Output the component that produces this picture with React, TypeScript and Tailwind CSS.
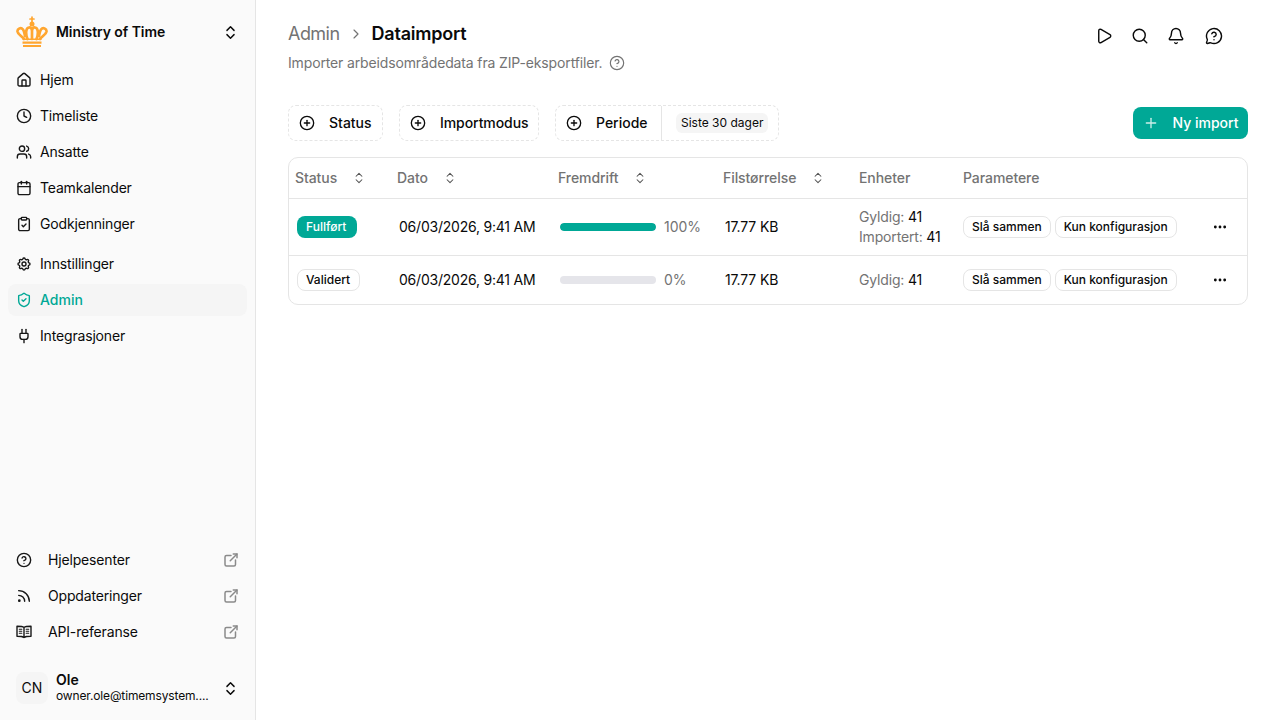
import React from "react";
import {
  House, Clock, Users, Calendar, ClipboardCheck, ShieldCheck, Plug, CircleHelp, Rss,
  ChevronsUpDown, Play, Search, Bell, MessageCircleQuestion, CirclePlus, Plus, Ellipsis, ChevronRight,
} from "lucide-react";
import { TbExternalLink, TbSettings } from "react-icons/tb";

const Crown = () => (
  <svg width="32" height="32" viewBox="0 0 32 32" fill="none" className="shrink-0">
    <g stroke="#FFA630" strokeLinecap="round" strokeLinejoin="round">
      <path d="M16 1v5M14 3h4" strokeWidth="1.700" />
      <path d="M8 23C6 20 2 19 1.500 15.500 1.200 12.500 5 11 7 13.500 8.500 15.500 8.500 18 9 20M11.500 23C9.500 18 9.500 12 13 11.500 15 11.200 16 13 16 15 16 13 17 11.200 19 11.500 22.500 12 22.500 18 20.500 23M24 23C26 20 30 19 30.500 15.500 30.800 12.500 27 11 25 13.500 23.500 15.500 23.500 18 23 20M16 15V23" strokeWidth="2.700" />
    </g>
    <circle cx="16" cy="8" r="2.500" fill="#FFA630" />
    <path d="M6.500 22.500h19v1.500h-19zM6.500 25.500h19v2.200h-19zM7 29h18v2h-18z" fill="#FFA630" />
  </svg>
);

const BookIcon = ({ size = 16, className = "" }: { size?: number; strokeWidth?: number; className?: string }) => (
  <svg width={size} height={size} viewBox="0 0 16 16" fill="none" stroke="currentColor" strokeWidth="1.400" strokeLinecap="round" strokeLinejoin="round" className={className}>
    <path d="M8 3.500C7 2.700 5.500 2.300 1 2.300v9.900c4.500 0 6 .4 7 1.300 1-.9 2.500-1.300 7-1.300V2.300c-4.500 0-6 .4-7 1.200zM8 3.500v10" />
    <path d="M3.300 5.300h2.500M3.300 7.300h2.500M3.300 9.300h2.500M10.200 5.300h2.500M10.200 7.300h2.500M10.200 9.300h2.500" strokeWidth="1.100" />
  </svg>
);

const NavItem = ({ icon: Icon, label, active }: { icon: any; label: string; active?: boolean }) => (
  <a className={`flex h-8 items-center gap-2 rounded-lg px-2 text-sm ${active ? "bg-[#f5f5f5] font-medium text-[#00a896]" : "tracking-[-0.012em] text-[#0a0a0a]"}`}>
    <Icon size={16} strokeWidth={2.1} className={active ? "text-[#00a896]" : "text-[#171717]"} />
    <span>{label}</span>
  </a>
);

const FootItem = ({ icon: Icon, label }: { icon: any; label: string }) => (
  <a className="flex h-8 items-center rounded-lg px-2 text-sm tracking-[-0.012em] text-[#0a0a0a]">
    <Icon size={16} strokeWidth={2.1} className="text-[#171717]" />
    <span className="ml-4 flex-1">{label}</span>
    <TbExternalLink size={18} strokeWidth={2} className="-mr-px text-[#8a8a8a]" />
  </a>
);

const Filter = ({ label, className = "" }: { label: string; className?: string }) => (
  <button className={`flex h-9 items-center gap-[14px] rounded-lg border border-dashed border-[#e5e5e5] pl-[10px] text-sm font-medium text-[#0a0a0a] ${className}`}>
    <CirclePlus size={16} strokeWidth={2} />
    {label}
  </button>
);

const Head = ({ label, sort, className = "" }: { label: string; sort?: boolean; className?: string }) => (
  <th className={`h-10 py-0 pt-px text-left align-middle text-sm font-medium tracking-[-0.005em] text-[#737373] ${className}`}>
    <span className="flex items-center gap-[15px]">
      {label}
      {sort && <ChevronsUpDown size={14} strokeWidth={1.75} className="text-[#525252]" />}
    </span>
  </th>
);

const Tag = ({ children }: { children: React.ReactNode }) => (
  <span className="flex h-[22px] items-center rounded-lg border border-[#e5e5e5] px-2 text-xs font-medium text-[#0a0a0a]">{children}</span>
);

const Row = ({ status, pct, imported }: { status: "done" | "valid"; pct: number; imported?: boolean }) => (
  <tr className={imported ? "h-[57px] border-b border-[#e5e5e5]" : "h-[49px]"}>
    <td className="px-2 align-middle">
      <div className="flex">
        {status === "done" ? (
          <span className="flex h-[22px] w-[60px] items-center rounded-lg bg-[#00a896] pl-[9px] text-xs font-medium text-white">Fullført</span>
        ) : (
          <span className="flex h-[22px] w-[63px] items-center rounded-lg border border-[#e5e5e5] pl-2 text-xs font-medium text-[#0a0a0a]">Validert</span>
        )}
      </div>
    </td>
    <td className="px-2 align-middle text-sm tracking-[-0.016em] text-[#0a0a0a]">06/03/2026, 9:41 AM</td>
    <td className="px-2 align-middle">
      <div className="flex items-center gap-2">
        <div className="h-2 w-24 overflow-hidden rounded-full bg-[#e5e5ea]">
          <div className="h-full rounded-full bg-[#00a896]" style={{ width: `${pct}%` }} />
        </div>
        <span className="text-sm text-[#737373]">{pct}%</span>
      </div>
    </td>
    <td className="px-2 align-middle text-sm tracking-[-0.01em] text-[#0a0a0a]">17.77 KB</td>
    <td className="px-2 align-middle text-sm leading-5 tracking-[-0.012em] text-[#737373]">
      <div>Gyldig: <span className="text-[#0a0a0a]">41</span></div>
      {imported && <div>Importert: <span className="text-[#0a0a0a]">41</span></div>}
    </td>
    <td className="px-2 align-middle">
      <div className="flex gap-1">
        <Tag>Slå sammen</Tag>
        <Tag>Kun konfigurasjon</Tag>
      </div>
    </td>
    <td className="pl-[13px] align-middle">
      <Ellipsis size={16} strokeWidth={2.25} className="text-[#0a0a0a]" />
    </td>
  </tr>
);

export default function App() {
  return (
    <div className="flex h-[720px] w-[1280px] overflow-hidden bg-white font-['Inter',sans-serif] text-[#0a0a0a]">
      <aside className="flex w-[256px] shrink-0 flex-col border-r border-[#e5e5e5] bg-[#fafafa]">
        <div className="flex h-[64px] shrink-0 items-center pl-4 pr-4">
          <Crown />
          <span className="ml-2 flex-1 text-sm font-semibold tracking-[-0.005em]">Ministry of Time</span>
          <ChevronsUpDown size={17} strokeWidth={2} />
        </div>
        <nav className="flex flex-col gap-1 pl-2 pr-2">
          <NavItem icon={House} label="Hjem" />
          <NavItem icon={Clock} label="Timeliste" />
          <NavItem icon={Users} label="Ansatte" />
          <NavItem icon={Calendar} label="Teamkalender" />
          <NavItem icon={ClipboardCheck} label="Godkjenninger" />
          <div className="mt-1 flex flex-col gap-1">
            <NavItem icon={TbSettings} label="Innstillinger" />
            <NavItem icon={ShieldCheck} label="Admin" active />
            <NavItem icon={Plug} label="Integrasjoner" />
          </div>
        </nav>
        <div className="mt-auto flex flex-col gap-1 pl-2 pr-2">
          <FootItem icon={CircleHelp} label="Hjelpesenter" />
          <FootItem icon={Rss} label="Oppdateringer" />
          <FootItem icon={BookIcon} label="API-referanse" />
        </div>
        <div className="mb-4 mt-[24px] flex h-8 items-center pl-4 pr-4">
          <div className="flex size-8 shrink-0 items-center justify-center rounded-lg bg-[#f5f5f5] text-sm">CN</div>
          <div className="ml-2 min-w-0 flex-1">
            <div className="text-sm font-semibold leading-4">Ole</div>
            <div className="whitespace-nowrap text-xs leading-4 tracking-[-0.012em]">owner.ole@timemsystem....</div>
          </div>
          <ChevronsUpDown size={17} strokeWidth={2} />
        </div>
      </aside>
      <main className="min-w-0 flex-1 px-8">
        <div className="flex h-[105px] items-start justify-between">
          <div className="pt-[22px]">
            <div className="flex h-6 items-center text-lg">
              <span className="tracking-[-0.03em] text-[#737373]">Admin</span>
              <ChevronRight size={16} strokeWidth={1.75} className="mx-2 text-[#737373]" />
              <span className="font-semibold tracking-[-0.012em]">Dataimport</span>
            </div>
            <div className="mt-[7px] flex h-5 items-center gap-[7px] text-sm tracking-[-0.01em] text-[#737373]">
              Importer arbeidsområdedata fra ZIP-eksportfiler.
              <CircleHelp size={16} strokeWidth={1.75} />
            </div>
          </div>
          <div className="mr-[25px] mt-[27px] flex items-center gap-[18px]">
            <Play size={18} strokeWidth={1.9} />
            <Search size={18} strokeWidth={1.9} />
            <Bell size={18} strokeWidth={1.9} />
            <MessageCircleQuestion size={18} strokeWidth={1.9} className="ml-[2px]" />
          </div>
        </div>
        <div className="flex items-center gap-4">
          <Filter label="Status" className="w-[95px]" />
          <Filter label="Importmodus" className="w-[140px] tracking-[-0.005em]" />
          <div className="flex h-9 w-[224px] items-center rounded-lg border border-dashed border-[#e5e5e5] text-sm font-medium">
            <div className="flex h-full w-[106px] shrink-0 items-center gap-[14px] border-r border-[#e5e5e5] pl-[10px]">
              <CirclePlus size={16} strokeWidth={2} />
              Periode
            </div>
            <span className="ml-[14px] rounded-md bg-[#f5f5f5] px-[5px] py-[2px] text-xs font-normal">Siste 30 dager</span>
          </div>
          <button className="ml-auto flex h-8 w-[115px] items-center justify-center gap-[14px] rounded-lg bg-[#00a896] text-sm font-medium text-white">
            <Plus size={16} strokeWidth={2} className="text-[#cceee9]" />
            Ny import
          </button>
        </div>
        <div className="mt-4 overflow-hidden rounded-[10px] border border-[#e5e5e5]">
          <table className="w-full table-fixed border-collapse">
            <colgroup>
              <col className="w-[102px]" />
              <col className="w-[161px]" />
              <col className="w-[165px]" />
              <col className="w-[134px]" />
              <col className="w-[104px]" />
              <col className="w-[244px]" />
              <col />
            </colgroup>
            <thead>
              <tr className="border-b border-[#e5e5e5]">
                <Head label="Status" sort className="pl-[6px]" />
                <Head label="Dato" sort className="pl-[6px]" />
                <Head label="Fremdrift" sort className="pl-[6px]" />
                <Head label="Filstørrelse" sort className="pl-[6px]" />
                <Head label="Enheter" className="pl-2" />
                <Head label="Parametere" className="pl-2" />
                <th />
              </tr>
            </thead>
            <tbody>
              <Row status="done" pct={100} imported />
              <Row status="valid" pct={0} />
            </tbody>
          </table>
        </div>
      </main>
    </div>
  );
}
